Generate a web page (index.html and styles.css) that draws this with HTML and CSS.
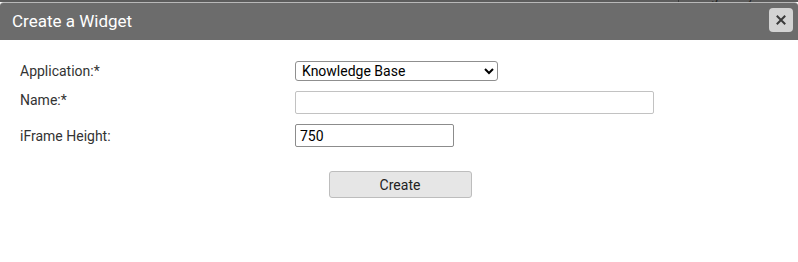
FILE: index.html
```html
<!DOCTYPE html>
<html lang="en">

<head>
    <meta charset="UTF-8" />
    <title>Create a Widget</title>
    <link rel="stylesheet" href="styles.css">
</head>

<body>

    <div class="backdrop">
        <span class="bg-col first">Name</span>
        <span class="bg-col second">Widget Key</span>
    </div>

    <div class="dialog">
        <div class="titlebar">
            <span class="title">Create a Widget</span>
            <button class="close" title="Close">
                <svg width="12" height="12" viewBox="0 0 12 12">
                    <path d="M2.5 2.5 L9.5 9.5 M9.5 2.5 L2.5 9.5" stroke="#3a3a3a" stroke-width="2" stroke-linecap="square" />
                </svg>
            </button>
        </div>

        <div class="dialog-body">
            <div class="form">
                <label class="lbl">Application:*</label>
                <div>
                    <select class="app-select">
                        <option>Knowledge Base</option>
                    </select>
                </div>

                <label class="lbl lbl-name">Name:*</label>
                <div>
                    <input type="text" class="txt txt-wide" />
                </div>

                <label class="lbl">iFrame Height:</label>
                <div>
                    <input type="text" class="txt txt-short" value="750" />
                </div>
            </div>

            <div class="actions">
                <button class="btn">Create</button>
            </div>
        </div>
    </div>

</body>

</html>
```

FILE: styles.css
```css
html,
body {
    margin: 0;
    padding: 0;
    height: 100%;
    background-color: #ffffff;
    font-family: Roboto, "Liberation Sans", sans-serif;
    overflow: hidden;
}

.backdrop {
    height: 2px;
    overflow: hidden;
    background: #5c5c5c;
    display: flex;
    font-size: 13px;
    color: #1e1e1e;
    line-height: 2px;
}

.bg-col {
    display: block;
    margin-top: -5px;
}

.bg-col.first {
    margin-left: 35px;
    width: 643px;
}

.bg-col.second {
    border-left: 1px solid #3c3c3c;
    padding-left: 10px;
    height: 20px;
}

.dialog {
    border-top: 1px solid #b8b8b8;
    border-radius: 4px 4px 0 0;
    background: #fff;
}

.titlebar {
    height: 37px;
    background: #6c6c6c;
    display: flex;
    align-items: center;
    justify-content: space-between;
    padding: 0 5px 0 12px;
    border-radius: 3px 3px 0 0;
}

.title {
    color: #ffffff;
    font-size: 17px;
    margin-top: -2px;
}

.close {
    width: 24px;
    height: 24px;
    border: none;
    border-radius: 4px;
    background: #d3d3d3;
    padding: 0;
    display: flex;
    align-items: center;
    justify-content: center;
    margin-top: -3px;
}

.dialog-body {
    padding: 21px 0 0 20px;
}

.form {
    display: grid;
    grid-template-columns: 275px 1fr;
    row-gap: 10px;
    align-items: center;
}

.lbl {
    font-size: 14px;
    color: #333;
}

.lbl-name {
    margin-bottom: 6px;
}

.app-select {
    width: 203px;
    height: 20px;
    font-family: Roboto, "Liberation Sans", sans-serif;
    font-size: 14px;
    color: #000;
    border: 1px solid #8f8f8f;
    border-radius: 3px;
    background: #fff;
    padding: 0 2px;
    display: block;
}

.txt {
    height: 23px;
    box-sizing: border-box;
    border: 1px solid #a8a8a8;
    border-radius: 2px;
    font-family: Roboto, "Liberation Sans", sans-serif;
    font-size: 14px;
    padding: 1px 4px;
    display: block;
    margin: 0;
}

.txt-wide {
    width: 359px;
    border-color: #c2c2c2;
}

.txt-short {
    width: 159px;
    border-color: #8c8c8c;
}

.actions {
    display: flex;
    justify-content: center;
    padding: 24px 18px 0 0;
}

.btn {
    width: 143px;
    height: 27px;
    background: #e6e6e6;
    border: 1px solid #bdbdbd;
    border-radius: 3px;
    font-family: Roboto, "Liberation Sans", sans-serif;
    font-size: 14px;
    color: #222;
}
```
